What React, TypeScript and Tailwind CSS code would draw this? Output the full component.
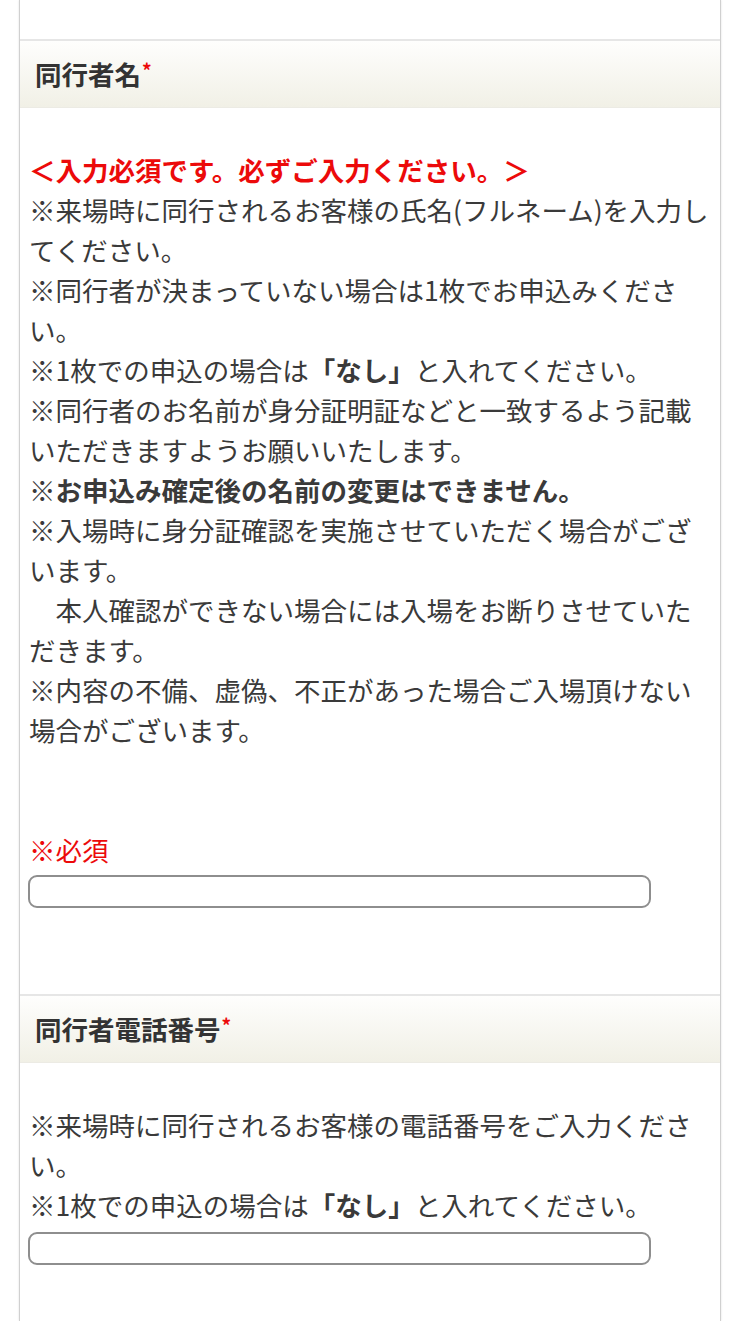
import React from 'react';

const RED = 'text-[#ec0a0a]';

const SectionHeader: React.FC<{ title: string }> = ({ title }) => (
  <div className="h-[69px] border-t-2 border-b border-t-[#e6e6e6] border-b-[#ecebe4] bg-linear-to-b from-[#fefefd] to-[#f1f0e6] pl-[15px] flex items-center">
    <h2 className="text-[26.5px] font-bold text-[#333] leading-none">
      {title}
      <sup className={`${RED} text-[19px] font-bold relative -top-[7px] ml-[1px]`}>*</sup>
    </h2>
  </div>
);

const TextInput: React.FC<{ className?: string }> = ({ className = '' }) => (
  <input
    type="text"
    className={`block h-[33px] w-[623px] -ml-px rounded-[9px] border-2 border-[#8e8e8e] bg-white outline-none ${className}`}
  />
);

export default function App() {
  return (
    <div
      className="min-h-[1321px] bg-white"
      style={{ fontFamily: '"Noto Sans CJK JP", "Noto Sans", sans-serif' }}
    >
      <div className="mx-[19px] w-[702px] min-h-[1321px] border-x border-[#d0d0d0] shadow-[0_0_2px_rgba(0,0,0,0.12)] bg-white">
        {/* previous section tail */}
        <div className="h-[39px]" />

        <SectionHeader title="同行者名" />

        <div className="px-[9px] pt-[42px] text-[26.5px] leading-[40px] text-[#3a3a3a] whitespace-nowrap">
          <p className={`${RED} font-bold`}>＜入力必須です。必ずご入力ください。＞</p>
          <p>
            ※来場時に同行されるお客様の氏名(フルネーム)を入力し
            <br />
            てください。
            <br />
            ※同行者が決まっていない場合は1枚でお申込みくださ
            <br />
            い。
            <br />
            ※1枚での申込の場合は<span className="font-bold">「なし」</span>と入れてください。
            <br />
            ※同行者のお名前が身分証明証などと一致するよう記載
            <br />
            いただきますようお願いいたします。
            <br />
            ※<span className="font-bold">お申込み確定後の名前の変更はできません。</span>
            <br />
            ※入場時に身分証確認を実施させていただく場合がござ
            <br />
            います。
            <br />
            {'\u3000'}本人確認ができない場合には入場をお断りさせていた
            <br />
            だきます。
            <br />
            ※内容の不備、虚偽、不正があった場合ご入場頂けない
            <br />
            場合がございます。
            <br />
            <br />
            <br />
            <span className={RED}>※必須</span>
          </p>
          <TextInput className="mt-[5px]" />
          <div className="h-[86px]" />
        </div>

        <SectionHeader title="同行者電話番号" />

        <div className="px-[9px] pt-[42px] text-[26.5px] leading-[40px] text-[#3a3a3a] whitespace-nowrap">
          <p>
            ※来場時に同行されるお客様の電話番号をご入力くださ
            <br />
            い。
            <br />
            ※1枚での申込の場合は<span className="font-bold">「なし」</span>と入れてください。
          </p>
          <TextInput className="mt-[7px]" />
        </div>
      </div>
    </div>
  );
}
